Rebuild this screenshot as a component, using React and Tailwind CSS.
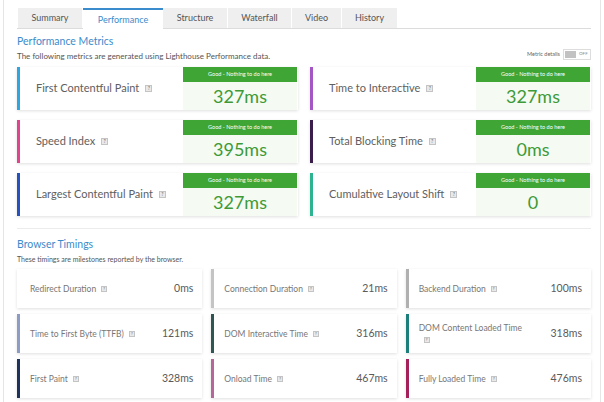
import React from "react";

const tabs = [
  { name: "Summary", w: "w-[65px]" },
  { name: "Performance", w: "w-[80px]", active: true },
  { name: "Structure", w: "w-[65px]" },
  { name: "Waterfall", w: "w-[64px]" },
  { name: "Video", w: "w-[50px]" },
  { name: "History", w: "w-[56px]" },
];

const metrics = [
  { label: "First Contentful Paint", value: "327ms", bar: "border-l-[#2ea6df]" },
  { label: "Time to Interactive", value: "327ms", bar: "border-l-[#a457c4]" },
  { label: "Speed Index", value: "395ms", bar: "border-l-[#e2438d]" },
  { label: "Total Blocking Time", value: "0ms", bar: "border-l-[#3b1d4b]" },
  { label: "Largest Contentful Paint", value: "327ms", bar: "border-l-[#2452c0]" },
  { label: "Cumulative Layout Shift", value: "0", bar: "border-l-[#2db38f]" },
];

const timings = [
  { label: "Redirect Duration", value: "0ms", bar: "border-l-white" },
  { label: "Connection Duration", value: "21ms", bar: "border-l-[#c4c4c4]" },
  { label: "Backend Duration", value: "100ms", bar: "border-l-[#b0b0b0]" },
  { label: "Time to First Byte (TTFB)", value: "121ms", bar: "border-l-[#8d9cc6]" },
  { label: "DOM Interactive Time", value: "316ms", bar: "border-l-[#2f5652]" },
  { label: "DOM Content Loaded Time", value: "318ms", bar: "border-l-[#1c7f7c]", wrap: true },
  { label: "First Paint", value: "328ms", bar: "border-l-[#1d335d]" },
  { label: "Onload Time", value: "467ms", bar: "border-l-[#b5679a]" },
  { label: "Fully Loaded Time", value: "476ms", bar: "border-l-[#a3205b]" },
];

function Help({ small }) {
  return (
    <span
      className={
        small
          ? "ml-[5px] inline-flex h-[6px] w-[6px] items-center justify-center border border-[#c4c4c4] bg-[#e9e9e9] align-middle text-[4px] leading-none text-[#666]"
          : "ml-[6px] inline-flex h-[7px] w-[7px] items-center justify-center border border-[#c4c4c4] bg-[#e9e9e9] align-middle text-[5px] leading-none text-[#666]"
      }
    >
      ?
    </span>
  );
}

function MetricCard({ m }) {
  return (
    <div className={`flex h-[43px] border-l-[3px] bg-white shadow-[0_1px_3px_rgba(0,0,0,0.13)] ${m.bar}`}>
      <div className="flex flex-1 items-center pl-[16px] text-[11px] text-[#606060]">
        {m.label}
        <Help />
      </div>
      <div className="mr-[1px] flex w-[114px] flex-col">
        <div className="flex h-[15px] items-center justify-center bg-[#3fa535] text-[5.5px] text-white">
          Good - Nothing to do here
        </div>
        <div className="flex flex-1 items-center justify-center bg-[#f5faf3] text-[18px] leading-none text-[#3e9a37]">
          {m.value}
        </div>
      </div>
    </div>
  );
}

function TimingCard({ t }) {
  return (
    <div className={`flex h-[39px] items-center justify-between border-l-[3px] bg-white pl-[10px] pr-[9px] shadow-[0_1px_3px_rgba(0,0,0,0.13)] ${t.bar}`}>
      <div className="text-[8.5px] leading-[12px] text-[#777]">
        {t.label}
        {t.wrap ? <br /> : null}
        <Help small />
      </div>
      <div className="text-[10.5px] text-[#5a5a5a]">{t.value}</div>
    </div>
  );
}

export default function App() {
  return (
    <div className="h-[402px] w-[604px] overflow-hidden bg-white font-['Lato',sans-serif]">
      <div className="ml-[3px] h-full w-[598px] border-x border-[#e6e6e6] pl-[13px] pr-[9px] pt-[8px]">
        {/* tabs */}
        <div className="flex h-[21px] border-b border-[#dcdcdc] pl-[1px]">
          {tabs.map((t) => (
            <div
              key={t.name}
              className={
                t.active
                  ? `${t.w} -mb-[1px] flex items-center justify-center border-t-2 border-[#3b8ccc] bg-white text-[9px] text-[#3b8ccc]`
                  : `${t.w} flex items-center justify-center border-r border-white bg-[#efefef] text-[9px] text-[#555]`
              }
            >
              {t.name}
            </div>
          ))}
        </div>

        {/* performance metrics */}
        <div className="mt-[5px] flex items-end justify-between">
          <div>
            <h2 className="text-[10.5px] leading-[14px] text-[#3b8ccc]">Performance Metrics</h2>
            <p className="mt-[4px] text-[8px] leading-[8px] text-[#555]">
              The following metrics are generated using Lighthouse Performance data.
            </p>
          </div>
          <div className="flex items-center gap-[3px]">
            <span className="text-[5.5px] text-[#666]">Metric details</span>
            <div className="flex h-[11px] w-[28px] items-center border border-[#ddd] bg-white p-[1px]">
              <div className="h-full w-[11px] bg-[#c2c2c2]" />
              <span className="ml-[3px] text-[4.5px] text-[#888]">OFF</span>
            </div>
          </div>
        </div>

        <div className="mt-[7px] grid grid-cols-2 gap-x-[12px] gap-y-[10px]">
          {metrics.map((m) => (
            <MetricCard key={m.label} m={m} />
          ))}
        </div>

        <div className="mt-[12px] border-t border-[#ececec]" />

        {/* browser timings */}
        <h2 className="mt-[8px] text-[10.5px] leading-[14px] text-[#3b8ccc]">Browser Timings</h2>
        <p className="mt-[4px] text-[7px] leading-[8px] text-[#555]">
          These timings are milestones reported by the browser.
        </p>

        <div className="mt-[6px] grid grid-cols-3 gap-x-[9px] gap-y-[6px]">
          {timings.map((t) => (
            <TimingCard key={t.label} t={t} />
          ))}
        </div>
      </div>
    </div>
  );
}
